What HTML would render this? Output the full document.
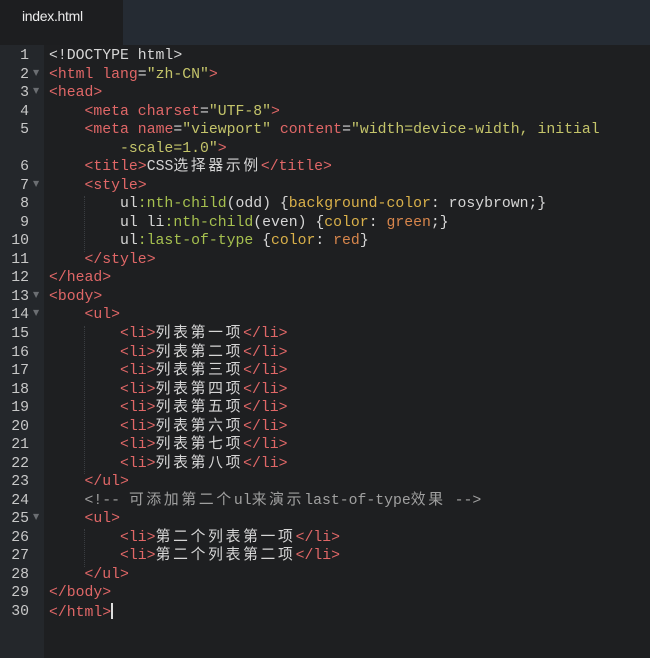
<!DOCTYPE html>
<html><head><meta charset="utf-8"><style>
html,body{margin:0;padding:0;width:650px;height:658px;overflow:hidden;background:#1e1f21}
.tabbar{position:absolute;left:0;top:0;width:650px;height:45px;background:#252b33}
.tab{position:absolute;left:0;top:0;width:123px;height:45px;background:#1d1e20;color:#ececec}
.tab span{position:absolute;left:22px;top:8px;font-family:"Liberation Sans",sans-serif;font-size:14px;letter-spacing:-0.3px}
.gutter{position:absolute;left:0;top:45px;width:44px;height:613px;background:#24272b}
.nums,.code{position:absolute;top:47px;font-family:"Liberation Mono","Noto Sans CJK SC",monospace;font-size:14.8px;line-height:18.53px;white-space:pre}
.nums{left:0;width:29px;text-align:right;color:#c8c8c8}
.code{left:49px;color:#d6d6d6}
.fold{position:absolute;left:33px;color:#6b6e72;font-size:8px;font-family:"DejaVu Sans",sans-serif}
.t{color:#e06767}.s{color:#c4c46a}.c{letter-spacing:2.7px}
.cm{color:#a0a0a0}.sel{color:#a6c04f}.p{color:#d9b04a}.v{color:#d8864c}
.guide{position:absolute;border-left:1px dotted #3a3d41}
.cursor{display:inline-block;width:1.5px;height:16px;background:#ddd;vertical-align:-3px}
</style></head><body>
<div class="tabbar"><div class="tab"><span>index.html</span></div></div>
<div class="gutter"></div>
<div class="nums">1
2
3
4
5

6
7
8
9
10
11
12
13
14
15
16
17
18
19
20
21
22
23
24
25
26
27
28
29
30</div>
<div class="fold" style="top:68px">▼</div>
<div class="fold" style="top:86px">▼</div>
<div class="fold" style="top:179px">▼</div>
<div class="fold" style="top:290px">▼</div>
<div class="fold" style="top:308px">▼</div>
<div class="fold" style="top:512px">▼</div>
<div class="guide" style="left:84px;top:196px;height:56px"></div>
<div class="guide" style="left:84px;top:326px;height:148px"></div>
<div class="guide" style="left:84px;top:529px;height:38px"></div>
<div class="code">&lt;!DOCTYPE html&gt;
<span class="t">&lt;html lang</span>=<span class="s">"zh-CN"</span><span class="t">&gt;</span>
<span class="t">&lt;head&gt;</span>
    <span class="t">&lt;meta charset</span>=<span class="s">"UTF-8"</span><span class="t">&gt;</span>
    <span class="t">&lt;meta name</span>=<span class="s">"viewport"</span> <span class="t">content</span>=<span class="s">"width=device-width, initial</span>
<span class="s">        -scale=1.0"</span><span class="t">&gt;</span>
    <span class="t">&lt;title&gt;</span>CSS<span class="c">选择器示例</span><span class="t">&lt;/title&gt;</span>
    <span class="t">&lt;style&gt;</span>
        ul<span class="sel">:nth-child</span>(odd) {<span class="p">background-color</span>: rosybrown;}
        ul li<span class="sel">:nth-child</span>(even) {<span class="p">color</span>: <span class="v">green</span>;}
        ul<span class="sel">:last-of-type</span> {<span class="p">color</span>: <span class="v">red</span>}
    <span class="t">&lt;/style&gt;</span>
<span class="t">&lt;/head&gt;</span>
<span class="t">&lt;body&gt;</span>
    <span class="t">&lt;ul&gt;</span>
        <span class="t">&lt;li&gt;</span><span class="c">列表第一项</span><span class="t">&lt;/li&gt;</span>
        <span class="t">&lt;li&gt;</span><span class="c">列表第二项</span><span class="t">&lt;/li&gt;</span>
        <span class="t">&lt;li&gt;</span><span class="c">列表第三项</span><span class="t">&lt;/li&gt;</span>
        <span class="t">&lt;li&gt;</span><span class="c">列表第四项</span><span class="t">&lt;/li&gt;</span>
        <span class="t">&lt;li&gt;</span><span class="c">列表第五项</span><span class="t">&lt;/li&gt;</span>
        <span class="t">&lt;li&gt;</span><span class="c">列表第六项</span><span class="t">&lt;/li&gt;</span>
        <span class="t">&lt;li&gt;</span><span class="c">列表第七项</span><span class="t">&lt;/li&gt;</span>
        <span class="t">&lt;li&gt;</span><span class="c">列表第八项</span><span class="t">&lt;/li&gt;</span>
    <span class="t">&lt;/ul&gt;</span>
    <span class="cm">&lt;!-- <span class="c">可添加第二个</span>ul<span class="c">来演示</span>last-of-type<span class="c">效果</span> --&gt;</span>
    <span class="t">&lt;ul&gt;</span>
        <span class="t">&lt;li&gt;</span><span class="c">第二个列表第一项</span><span class="t">&lt;/li&gt;</span>
        <span class="t">&lt;li&gt;</span><span class="c">第二个列表第二项</span><span class="t">&lt;/li&gt;</span>
    <span class="t">&lt;/ul&gt;</span>
<span class="t">&lt;/body&gt;</span>
<span class="t">&lt;/html&gt;</span><span class="cursor"></span></div>
</body></html>
